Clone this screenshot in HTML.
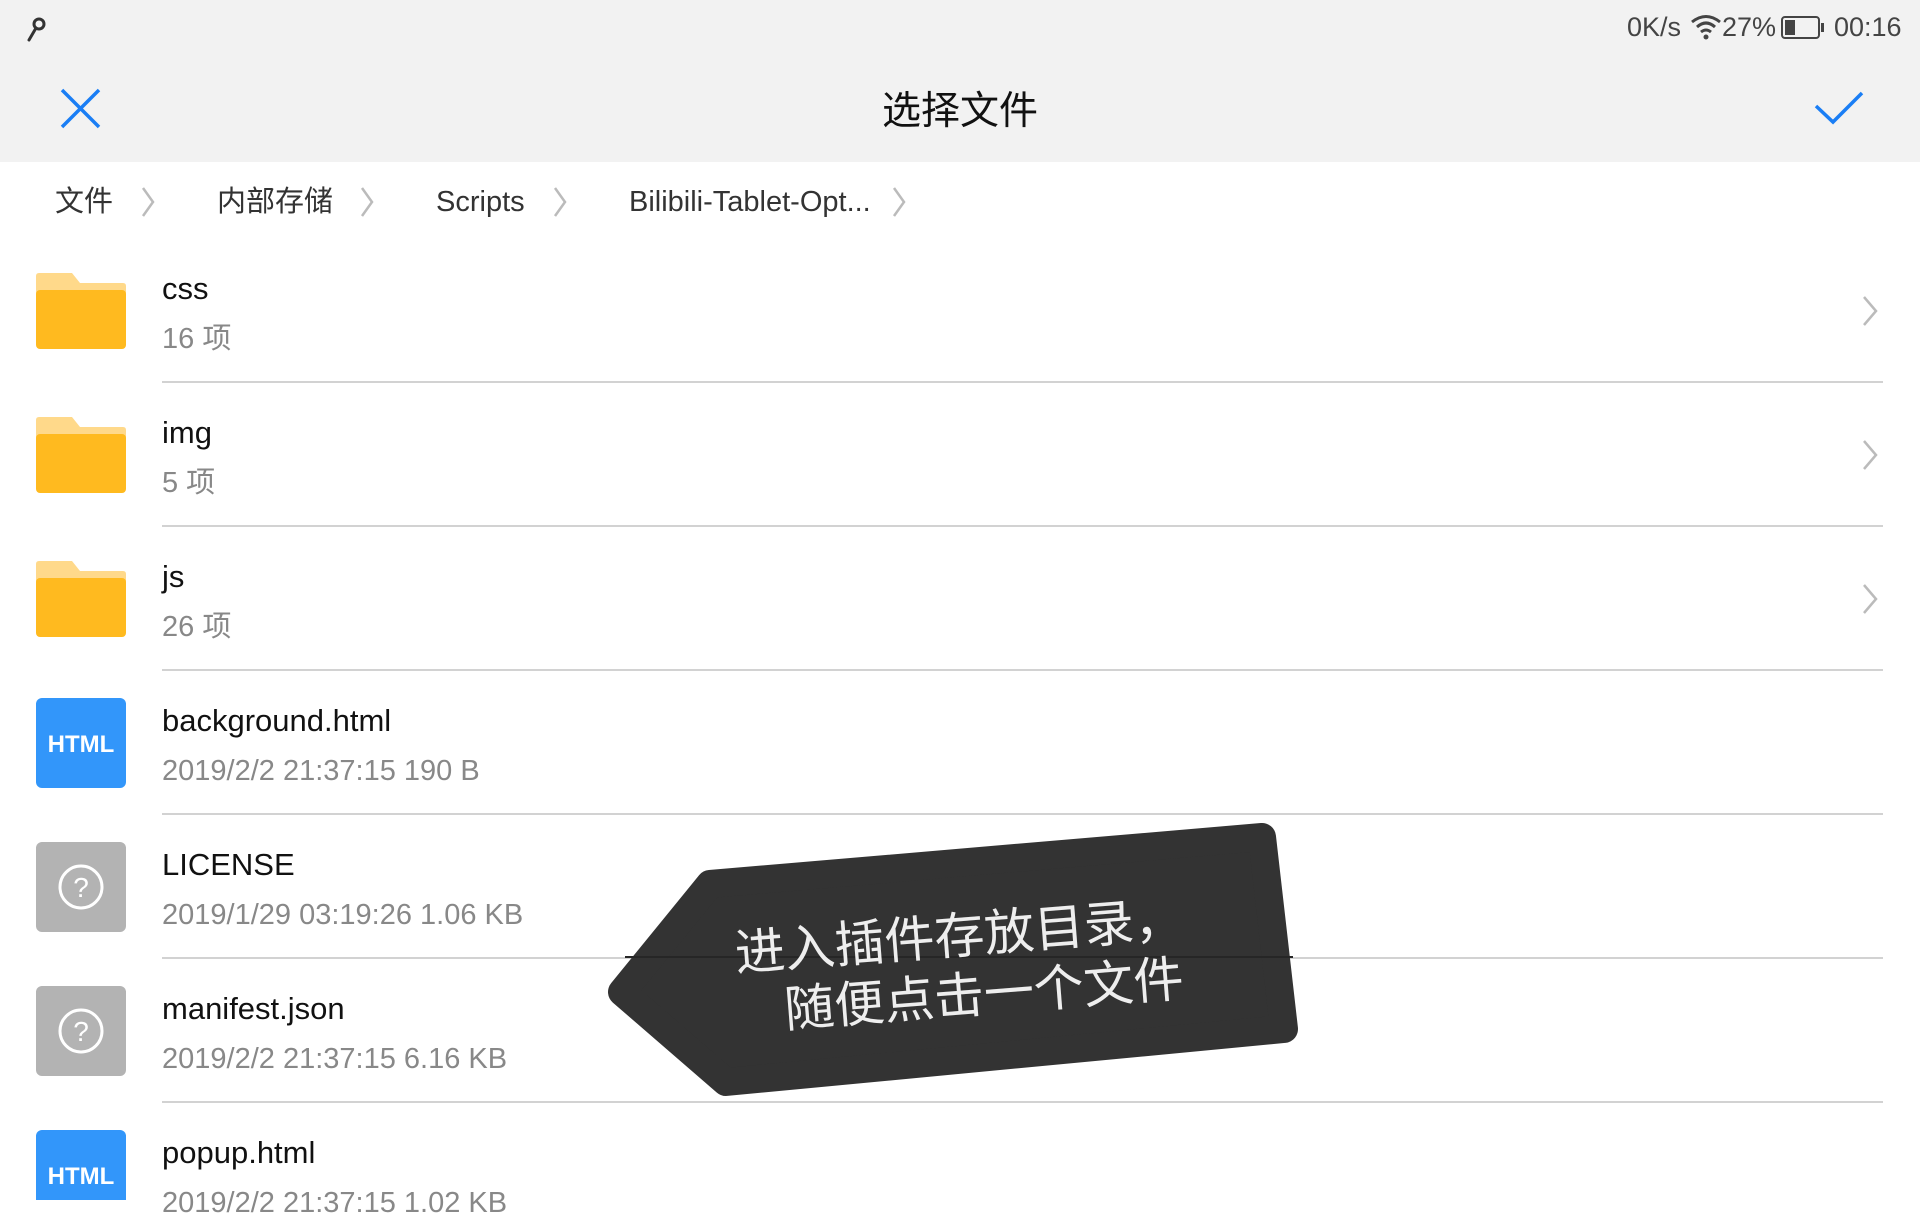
<!DOCTYPE html>
<html><head><meta charset="utf-8"><style>
*{margin:0;padding:0;box-sizing:border-box}
body{width:1920px;height:1200px;overflow:hidden;background:#fff;font-family:"Liberation Sans","Noto Sans CJK SC",sans-serif;position:relative}
.abs{position:absolute}
.top{left:0;top:0;width:1920px;height:162px;background:#f2f2f2}
.st{top:12px;font-size:27px;color:#444;line-height:30px}
.title{left:0;width:1920px;top:88px;text-align:center;font-size:39px;color:#111;line-height:48px}
.bc{top:184px;font-size:29px;color:#333;line-height:36px}
.name{left:162px;font-size:31px;color:#111;line-height:36px}
.sub{left:162px;font-size:29px;color:#888;line-height:34px}
.div{left:162px;width:1721px;height:2px;background:#d2d2d2}
</style></head><body>
<div class="abs top"></div>
<svg class="abs" style="left:20px;top:14px" width="30" height="30" viewBox="0 0 30 30"><circle cx="19" cy="10" r="5" fill="none" stroke="#333" stroke-width="3"/><path d="M16 14 L9 26" stroke="#333" stroke-width="3" stroke-linecap="round"/></svg>
<div class="abs st" style="left:1627px">0K/s</div>
<svg class="abs" style="left:1690px;top:14px" width="32" height="26" viewBox="0 0 32 26"><path d="M2 8 Q16 -3 30 8" fill="none" stroke="#444" stroke-width="3"/><path d="M7 13 Q16 5 25 13" fill="none" stroke="#444" stroke-width="3"/><path d="M11 18 Q16 14 21 18" fill="none" stroke="#444" stroke-width="3"/><circle cx="16" cy="23" r="2.5" fill="#444"/></svg>
<div class="abs st" style="left:1722px">27%</div>
<svg class="abs" style="left:1781px;top:16px" width="44" height="24" viewBox="0 0 44 24"><rect x="1" y="1" width="37" height="21" rx="3" fill="none" stroke="#444" stroke-width="2"/><rect x="4" y="4" width="10" height="15" fill="#444"/><rect x="40" y="7" width="3" height="9" fill="#444"/></svg>
<div class="abs st" style="left:1834px">00:16</div>
<svg class="abs" style="left:58px;top:88px" width="46" height="42" viewBox="0 0 46 42"><path d="M4 2 L41 39 M41 2 L4 39" stroke="#1a7ef5" stroke-width="3.5"/></svg>
<div class="abs title">选择文件</div>
<svg class="abs" style="left:1812px;top:88px" width="54" height="40" viewBox="0 0 54 40"><path d="M4 18 L21 34 L50 5" fill="none" stroke="#1a7ef5" stroke-width="3.5"/></svg>

<div class="abs bc" style="left:55px">文件</div>
<div class="abs bc" style="left:217px">内部存储</div>
<div class="abs bc" style="left:436px">Scripts</div>
<div class="abs bc" style="left:629px">Bilibili-Tablet-Opt...</div>
<svg class="abs" style="left:0;top:184px" width="1920" height="36"><g fill="none" stroke="#bbb" stroke-width="2.5"><path d="M143 4 L153 18 L143 32"/><path d="M362 4 L372 18 L362 32"/><path d="M555 4 L565 18 L555 32"/><path d="M894 4 L904 18 L894 32"/></g></svg>

<div class="abs name" style="top:271px">css</div><div class="abs sub" style="top:322px">16 项</div>
<div class="abs name" style="top:415px">img</div><div class="abs sub" style="top:466px">5 项</div>
<div class="abs name" style="top:559px">js</div><div class="abs sub" style="top:610px">26 项</div>
<div class="abs name" style="top:703px">background.html</div><div class="abs sub" style="top:754px">2019/2/2 21:37:15 190 B</div>
<div class="abs name" style="top:847px">LICENSE</div><div class="abs sub" style="top:898px">2019/1/29 03:19:26 1.06 KB</div>
<div class="abs name" style="top:991px">manifest.json</div><div class="abs sub" style="top:1042px">2019/2/2 21:37:15 6.16 KB</div>
<div class="abs name" style="top:1135px">popup.html</div><div class="abs sub" style="top:1186px">2019/2/2 21:37:15 1.02 KB</div>
<div class="abs div" style="top:381px"></div>
<div class="abs div" style="top:525px"></div>
<div class="abs div" style="top:669px"></div>
<div class="abs div" style="top:813px"></div>
<div class="abs div" style="top:957px"></div>
<div class="abs div" style="top:1101px"></div>

<svg class="abs" style="left:0;top:0" width="1920" height="1200">
<defs><g id="fold"><path d="M0 4 Q0 1 3 1 L36 1 L44 11 L87 11 Q90 11 90 14 L90 40 L0 40 Z" fill="#ffd98a"/><rect x="0" y="18" width="90" height="59" rx="4" fill="#ffba1f"/></g>
<g id="q"><rect width="90" height="90" rx="6" fill="#b3b3b3"/><circle cx="45" cy="45" r="21" fill="none" stroke="#fff" stroke-width="3"/><text x="45" y="55" text-anchor="middle" font-size="28" fill="#fff" font-family="Liberation Sans">?</text></g>
<g id="h"><rect width="90" height="90" rx="6" fill="#3296fa"/><text x="45" y="54" text-anchor="middle" font-size="24" font-weight="bold" fill="#fff" font-family="Liberation Sans">HTML</text></g></defs>
<use href="#fold" x="36" y="272"/><use href="#fold" x="36" y="416"/><use href="#fold" x="36" y="560"/>
<use href="#h" x="36" y="698"/><use href="#q" x="36" y="842"/><use href="#q" x="36" y="986"/><use href="#h" x="36" y="1130"/>
<g fill="none" stroke="#bbb" stroke-width="2.5"><path d="M1864 297 L1876 311 L1864 325"/><path d="M1864 441 L1876 455 L1864 469"/><path d="M1864 585 L1876 599 L1864 613"/></g>
<path d="M622 992 L710 884 L1262 837 L1284 1029 L726 1082 Z" fill="#333" stroke="#333" stroke-width="28" stroke-linejoin="round"/>
<line x1="625" y1="957" x2="1293" y2="957" stroke="#262626" stroke-width="2"/>
<g transform="rotate(-4.5 964 970)" font-family="Liberation Sans,Noto Sans CJK SC,sans-serif" font-size="50" fill="#eee" text-anchor="middle">
<text x="962" y="953">进入插件存放目录，</text>
<text x="982" y="1013">随便点击一个文件</text>
</g>
</svg>
</body></html>
